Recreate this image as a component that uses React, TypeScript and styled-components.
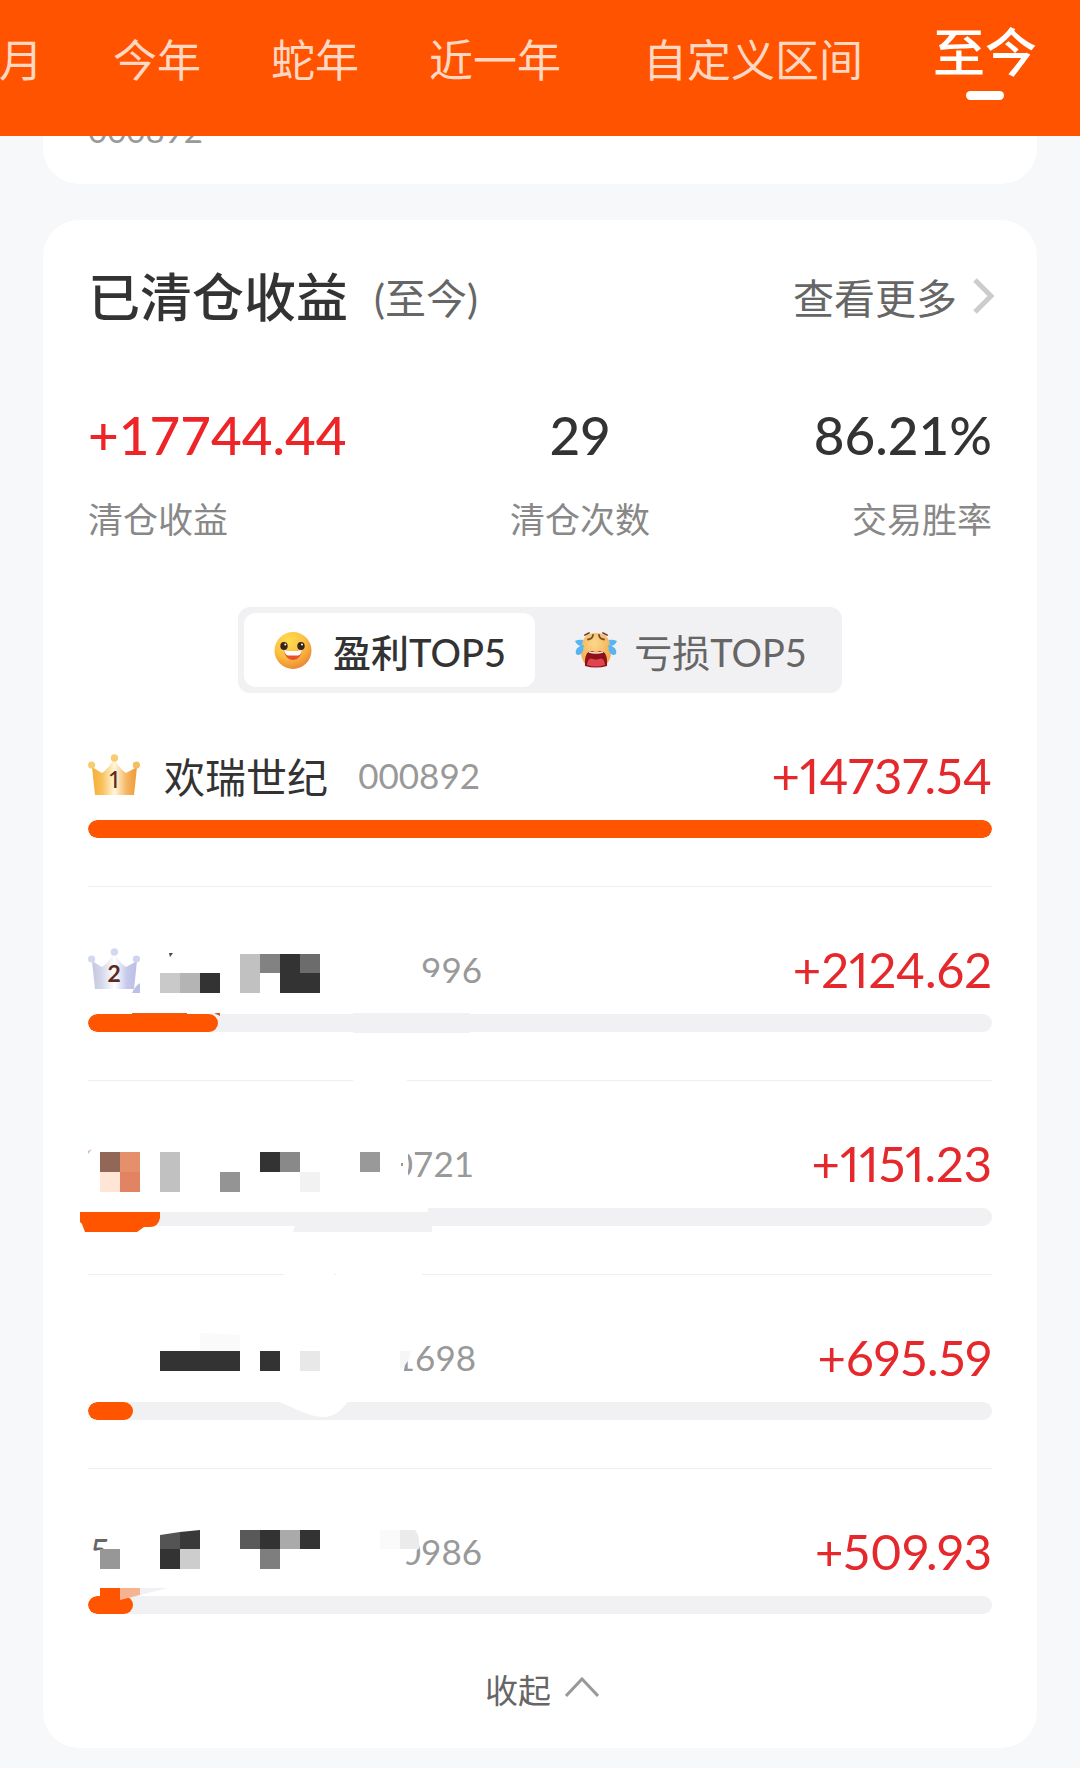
import React, { useState } from "react";
import styled, { createGlobalStyle } from "styled-components";

const GlobalStyle = createGlobalStyle`
  *, *::before, *::after { box-sizing: border-box; }
  body {
    margin: 0;
    background: #f7f8fa;
    color: #333;
    font-family: Lato, "Noto Sans CJK SC", sans-serif;
  }
  button {
    margin: 0;
    padding: 0;
    border: 0;
    background: none;
    color: inherit;
    font: inherit;
    cursor: pointer;
  }
`;

const Page = styled.div`
  padding-bottom: 20px;
`;

const PeriodBar = styled.nav`
  display: flex;
  justify-content: flex-end;
  align-items: flex-start;
  gap: 70px;
  height: 136px;
  padding-right: 43px;
  overflow: hidden;
  background: #ff5300;
`;

const PeriodTab = styled.button<{ $active: boolean; $wide: boolean }>`
  flex: none;
  display: flex;
  flex-direction: column;
  align-items: center;
  gap: 9px;
  padding-top: ${(p) => (p.$active ? 22 : 30)}px;
  padding-left: ${(p) => (p.$wide ? 12 : 0)}px;
  color: ${(p) => (p.$active ? "#fff" : "#ffd7c2")};
  font-size: ${(p) => (p.$active ? 52 : 44)}px;
  font-weight: ${(p) => (p.$active ? 500 : 400)};
  line-height: 60px;
  white-space: nowrap;
`;

const TabMark = styled.span`
  width: 38px;
  height: 9px;
  border-radius: 5px;
  background: #fff;
`;

const Content = styled.main`
  display: flex;
  flex-direction: column;
  gap: 36px;
  padding: 0 43px;
`;

const PreviousCard = styled.section`
  display: flex;
  align-items: flex-end;
  height: 48px;
  padding: 0 45px 34px;
  overflow: hidden;
  border-radius: 0 0 36px 36px;
  background: #fff;
  color: #999;
  font-size: 33px;
  line-height: 40px;
`;

const Card = styled.section`
  padding: 42px 45px 32px;
  border-radius: 36px;
  background: #fff;
`;

const CardHeader = styled.header`
  display: flex;
  align-items: center;
  height: 70px;
`;

const Title = styled.h2`
  margin: 0;
  font-size: 52px;
  font-weight: 500;
  line-height: 70px;
`;

const TitleNote = styled.span`
  margin-left: 26px;
  padding-bottom: 2px;
  color: #666;
  font-size: 41px;
`;

const MoreLink = styled.a`
  display: flex;
  align-items: center;
  gap: 16px;
  margin-right: -3px;
  margin-left: auto;
  padding-bottom: 2px;
  color: #666;
  font-size: 41px;
  text-decoration: none;
`;

const Stats = styled.dl`
  display: flex;
  justify-content: space-between;
  margin: 73px 0 63px;
`;

const Stat = styled.div<{ $align: string }>`
  display: flex;
  flex-direction: column-reverse;
  gap: 29px;
  text-align: ${(p) => p.$align};
`;

const StatLabel = styled.dt`
  color: #888;
  font-size: 35px;
  line-height: 50px;
`;

const StatValue = styled.dd<{ $gain: boolean }>`
  margin: 0;
  color: ${(p) => (p.$gain ? "#ee2528" : "#333")};
  font-size: 53px;
  font-weight: 500;
  line-height: 60px;
`;

const Segmented = styled.div`
  display: grid;
  grid-template-columns: 1fr 1fr;
  gap: 10px;
  width: 100%;
  max-width: 604px;
  height: 86px;
  margin: 0 auto;
  padding: 6px;
  border-radius: 12px;
  background: #f1f1f3;
`;

const Segment = styled.button<{ $active: boolean }>`
  display: flex;
  align-items: center;
  justify-content: center;
  gap: 16px;
  border-radius: 12px;
  background: ${(p) => (p.$active ? "#fff" : "transparent")};
  color: ${(p) => (p.$active ? "#333" : "#666")};
  font-size: 38px;
  font-weight: ${(p) => (p.$active ? 500 : 400)};
  white-space: nowrap;
`;

const RankList = styled.ol`
  margin: 0;
  padding: 0;
  list-style: none;
`;

const RankRow = styled.li`
  position: relative;
  padding: 53px 0 48px;
  border-bottom: 1px solid #eee;

  &:last-child { border-bottom: 0; }
`;

const RowInfo = styled.div`
  display: flex;
  align-items: center;
  height: 58px;
  margin-bottom: 16px;
`;

const RankSlot = styled.span`
  flex: none;
  width: 52px;
  height: 48px;
  padding-left: 2px;
  color: #666;
  font-size: 35px;
  line-height: 46px;
`;

const StockName = styled.span`
  width: 164px;
  margin-left: 24px;
  font-size: 41px;
  white-space: nowrap;
`;

const StockCode = styled.span<{ $width: number }>`
  width: ${(p) => p.$width}px;
  margin-left: 28px;
  color: #999;
  font-size: 35px;
  text-align: right;
`;

const Amount = styled.span`
  margin-left: auto;
  color: #e5282b;
  font-size: 49px;
  font-variant-numeric: proportional-nums;
`;

const Track = styled.div`
  height: 18px;
  overflow: hidden;
  border-radius: 9px;
  background: #f1f1f3;
`;

const Fill = styled.div`
  min-width: 45px;
  height: 100%;
  border-radius: 9px;
  background: #ff5500;
`;

const MaskLayer = styled.svg`
  position: absolute;
  top: 0;
  left: -18px;
  width: 440px;
  height: 194px;
  pointer-events: none;
`;

const CollapseButton = styled.button`
  display: flex;
  align-items: center;
  justify-content: center;
  gap: 14px;
  width: 100%;
  height: 54px;
  padding-left: 4px;
  color: #666;
  font-size: 33px;
`;

const CrownIcon = styled.svg`
  display: block;
  margin-left: -2px;
  font-variant-numeric: proportional-nums;
`;

function Crown({ rank }: { rank: 1 | 2 }) {
  const gold = rank === 1;
  const id = `crown-${rank}`;
  return (
    <CrownIcon width="52" height="46" viewBox="0 -1 52 46" role="img" aria-label={`第${rank}名`}>
      <defs>
        <linearGradient id={id}>
          <stop offset="0" stopColor={gold ? "#f5ae35" : "#c3c7e0"} />
          <stop offset=".22" stopColor={gold ? "#f8c05a" : "#d5d8ea"} />
          <stop offset=".5" stopColor={gold ? "#fff6da" : "#ffffff"} />
          <stop offset=".78" stopColor={gold ? "#f4b45d" : "#c5c8ea"} />
          <stop offset="1" stopColor={gold ? "#ef9a3c" : "#bcbfe6"} />
        </linearGradient>
      </defs>
      <path d="M4 15 L14 21 Q20 17 24 10 Q26 7 28 10 Q32 17 38 21 L49 15 L46 43 H7 Z" fill={`url(#${id})`} />
      <circle cx="3.6" cy="13" r="3.6" fill={gold ? "#f8cd72" : "#d3d8f0"} />
      <circle cx="26.4" cy="6" r="3.7" fill={gold ? "#f8cd72" : "#d3d8f0"} />
      <circle cx="48.4" cy="13" r="3.6" fill={gold ? "#f5bd62" : "#cfd2f0"} />
      <text x="26" y="36" textAnchor="middle" fontFamily="Lato, sans-serif" fontSize="23" fontWeight={gold ? 500 : 700} fill="#5e2a20">
        {rank}
      </text>
    </CrownIcon>
  );
}

function HappyFace() {
  return (
    <svg width="44" height="40" viewBox="0 0 44 40" aria-hidden="true">
      <defs>
        <radialGradient id="happy" cx=".38" cy=".25" r=".85">
          <stop offset="0" stopColor="#ffdc50" />
          <stop offset=".5" stopColor="#fcc040" />
          <stop offset="1" stopColor="#e77b33" />
        </radialGradient>
      </defs>
      <circle cx="20" cy="20.5" r="18.5" fill="url(#happy)" />
      <ellipse cx="11" cy="16" rx="3.7" ry="4" fill="#38241b" />
      <ellipse cx="28" cy="16" rx="3.7" ry="4" fill="#38241b" />
      <circle cx="12.3" cy="14.4" r="1" fill="#fff" />
      <circle cx="29" cy="14.4" r="1" fill="#fff" />
      <path d="M11 20 Q20 22 29 20 Q28 29.5 20 30 Q12 29.5 11 20Z" fill="#e9502e" />
      <path d="M11.2 20 Q20 22 28.8 20 Q28.5 25 25 25.4 H15 Q12 25 11.2 20Z" fill="#fff" />
    </svg>
  );
}

function CryingFace() {
  return (
    <svg width="44" height="40" viewBox="0 0 44 40" aria-hidden="true">
      <defs>
        <radialGradient id="crying" cx=".45" cy=".3" r=".75">
          <stop offset="0" stopColor="#fbd88a" />
          <stop offset="1" stopColor="#f0a544" />
        </radialGradient>
      </defs>
      <path d="M22 3 C34 3 38 13 37 22 C37 32 31 37 22 37 C13 37 7 32 7 22 C6 13 10 3 22 3Z" fill="url(#crying)" />
      <path d="M11 5 L15 3 M29 3 L33 5 M14 9.5 Q18.5 9 19 5 M25 5 Q25.5 9 30 9.5" fill="none" stroke="#76482f" strokeWidth="1.8" strokeLinecap="round" />
      <path d="M11 36 Q10 21 18 21 Q22 23 26 21 Q34 21 33 36 Q22 39 11 36Z" fill="#8f1219" />
      <path d="M13 35 Q14 27 19 29 Q22 30 25 29 Q30 27 31 35 Q22 38 13 35Z" fill="#df4450" />
      <path d="M15 22 Q22 24 29 22" fill="none" stroke="#fbe9df" strokeWidth="1.5" />
      <path d="M9 10 Q5 9 1 11 Q3 16 8 16Z M10 15 Q0 17 2 24 Q6 27 9 21Z" fill="#58b5f2" />
      <path d="M35 10 Q39 9 43 11 Q41 16 36 16Z M34 15 Q44 17 42 24 Q38 27 35 21Z" fill="#58b5f2" />
    </svg>
  );
}

type Cell = [x: number, y: number, w: number, h: number, fill: string];

function Cells({ cells }: { cells: Cell[] }) {
  return (
    <>
      {cells.map(([x, y, width, height, fill]) => (
        <rect key={`${x}-${y}`} x={x} y={y} width={width} height={height} fill={fill} />
      ))}
    </>
  );
}

const masks: Record<number, React.ReactNode> = {
  2: (
    <>
      <path d="M70 96 V106 H62 Q65 99 70 96Z" fill="#bcc0e4" />
      <path d="M99 66 H103 L100 70Z" fill="#444" />
      <Cells
        cells={[
          [90, 86, 20, 20, "#c9c9c9"],
          [110, 86, 20, 20, "#b4b4b4"],
          [130, 86, 20, 20, "#333"],
          [170, 67, 20, 39, "#c1c1c1"],
          [190, 67, 20, 19, "#828282"],
          [210, 67, 20, 39, "#333"],
          [230, 67, 20, 19, "#6c6c6c"],
          [230, 86, 20, 20, "#333"],
          [62, 126, 55, 1, "#dd6220"],
          [283, 126, 117, 20, "#f1f1f3"],
          [283, 192, 54, 2, "#fff"],
        ]}
      />
      <path d="M144 126 H150 V129Z" fill="#c95d20" />
      <path d="M344 84 L353 85 L361 90 H369 V102 H344Z" fill="#fff" />
    </>
  ),
  3: (
    <>
      <path d="M18 70 L22 68 L18 73Z" fill="#e0b5a2" />
      <Cells
        cells={[
          [314, 62, 24, 38, "#fff"],
          [30, 71, 20, 20, "#926757"],
          [50, 71, 20, 20, "#e5906b"],
          [30, 91, 20, 20, "#fee5d6"],
          [50, 91, 20, 20, "#e28364"],
          [90, 71, 20, 40, "#c1c1c1"],
          [150, 91, 20, 20, "#949494"],
          [190, 71, 20, 20, "#333"],
          [210, 71, 20, 20, "#898989"],
          [230, 91, 20, 20, "#f2f2f2"],
          [290, 71, 20, 20, "#999"],
          [331, 82, 2, 3, "#999"],
          [0, 125, 358, 6, "#fff"],
          [214, 192, 50, 2, "#fff"],
          [266, 192, 86, 2, "#fff"],
        ]}
      />
      <path d="M225 144 H362 V151 H223Z" fill="#f1f1f3" />
      <path d="M10 131 H90 V137 Q88 146 80 146 H74 L67 151 H15 L12 143 L10 141Z" fill="#ff5500" />
    </>
  ),
  4: (
    <>
      <path d="M322 62 H342 V80 L334 87 V100 H322Z" fill="#fff" />
      <path d="M130 58 L170 60 V76 H130Z" fill="#fafafa" />
      <path d="M330 76 H341 L339 84 L334 92 L330 95Z" fill="#f6f6f6" />
      <Cells
        cells={[
          [90, 76, 80, 20, "#333"],
          [190, 76, 20, 20, "#333"],
          [230, 76, 20, 20, "#e8e8e8"],
        ]}
      />
      <path d="M207 126 C225 133 240 142 253 142 C265 142 272 135 278 126Z" fill="#fff" />
    </>
  ),
  5: (
    <>
      <path d="M18 86 L28 83 L34 79 H50 V104 H18Z" fill="#fff" />
      <path d="M318 60 H348 V80 L342 86 L336 94 V102 H318Z" fill="#fff" />
      <path d="M90 66 L110 63 V80 H90Z" fill="#545454" />
      <path d="M110 63 L130 61 V80 H110Z" fill="#393939" />
      <path d="M330 61 H345 Q349 66 349 73 V80 H330Z" fill="#ebebeb" />
      <Cells
        cells={[
          [30, 80, 20, 20, "#979797"],
          [90, 80, 20, 20, "#333"],
          [110, 80, 20, 20, "#cdcdcd"],
          [170, 61, 20, 19, "#595959"],
          [190, 61, 20, 19, "#333"],
          [190, 80, 20, 20, "#7e7e7e"],
          [210, 61, 20, 19, "#aaa"],
          [230, 61, 20, 19, "#333"],
          [310, 61, 20, 19, "#fafafa"],
          [30, 119, 20, 12, "#ff5500"],
        ]}
      />
      <path d="M50 119 H70 V126 L50 131Z" fill="#f6b394" />
      <path d="M70 119 H98 L70 126Z" fill="#f1f1f3" />
    </>
  ),
};

const periods = ["月", "今年", "蛇年", "近一年", "自定义区间", "至今"];

const stats = [
  { label: "清仓收益", value: "+17744.44", align: "left", gain: true },
  { label: "清仓次数", value: "29", align: "center", gain: false },
  { label: "交易胜率", value: "86.21%", align: "right", gain: false },
];

const rows = [
  { rank: 1, name: "欢瑞世纪", code: "000892", codeWidth: 124, amount: 14737.54 },
  { rank: 2, name: "", code: "996", codeWidth: 126, amount: 2124.62 },
  { rank: 3, name: "", code: "0721", codeWidth: 118, amount: 1151.23 },
  { rank: 4, name: "", code: "1698", codeWidth: 120, amount: 695.59 },
  { rank: 5, name: "", code: "0986", codeWidth: 126, amount: 509.93 },
];

const topAmount = rows[0].amount;

export default function App() {
  const [period, setPeriod] = useState("至今");
  const [segment, setSegment] = useState("profit");

  return (
    <Page>
      <GlobalStyle />
      <PeriodBar>
        {periods.map((name) => (
          <PeriodTab key={name} type="button" $active={name === period} $wide={name.length > 3} onClick={() => setPeriod(name)}>
            {name}
            {name === period && <TabMark />}
          </PeriodTab>
        ))}
      </PeriodBar>
      <Content>
        <PreviousCard>000892</PreviousCard>
        <Card>
          <CardHeader>
            <Title>已清仓收益</Title>
            <TitleNote>(至今)</TitleNote>
            <MoreLink href="#more">
              查看更多
              <svg width="22" height="36" viewBox="0 0 22 36" aria-hidden="true">
                <path d="M2 2 L18 18 L2 34" fill="none" stroke="#ccc" strokeWidth="5" />
              </svg>
            </MoreLink>
          </CardHeader>
          <Stats>
            {stats.map((s) => (
              <Stat key={s.label} $align={s.align}>
                <StatLabel>{s.label}</StatLabel>
                <StatValue $gain={s.gain}>{s.value}</StatValue>
              </Stat>
            ))}
          </Stats>
          <Segmented>
            <Segment type="button" $active={segment === "profit"} onClick={() => setSegment("profit")}>
              <HappyFace />
              盈利TOP5
            </Segment>
            <Segment type="button" $active={segment === "loss"} onClick={() => setSegment("loss")}>
              <CryingFace />
              亏损TOP5
            </Segment>
          </Segmented>
          <RankList>
            {rows.map((row) => (
              <RankRow key={row.rank}>
                <RowInfo>
                  <RankSlot>
                    {(row.rank === 1 || row.rank === 2) && <Crown rank={row.rank} />}
                    {row.rank === 5 && row.rank}
                  </RankSlot>
                  <StockName>{row.name}</StockName>
                  <StockCode $width={row.codeWidth}>{row.code}</StockCode>
                  <Amount>+{row.amount.toFixed(2)}</Amount>
                </RowInfo>
                <Track>
                  <Fill style={{ width: `${(row.amount / topAmount) * 100}%` }} />
                </Track>
                {masks[row.rank] && (
                  <MaskLayer viewBox="0 0 440 194" aria-hidden="true">
                    {masks[row.rank]}
                  </MaskLayer>
                )}
              </RankRow>
            ))}
          </RankList>
          <CollapseButton type="button">
            收起
            <svg width="34" height="24" viewBox="0 0 34 24" aria-hidden="true">
              <path d="M1 19 L17 2 L33 19" fill="none" stroke="#999" strokeWidth="3" />
            </svg>
          </CollapseButton>
        </Card>
      </Content>
    </Page>
  );
}
